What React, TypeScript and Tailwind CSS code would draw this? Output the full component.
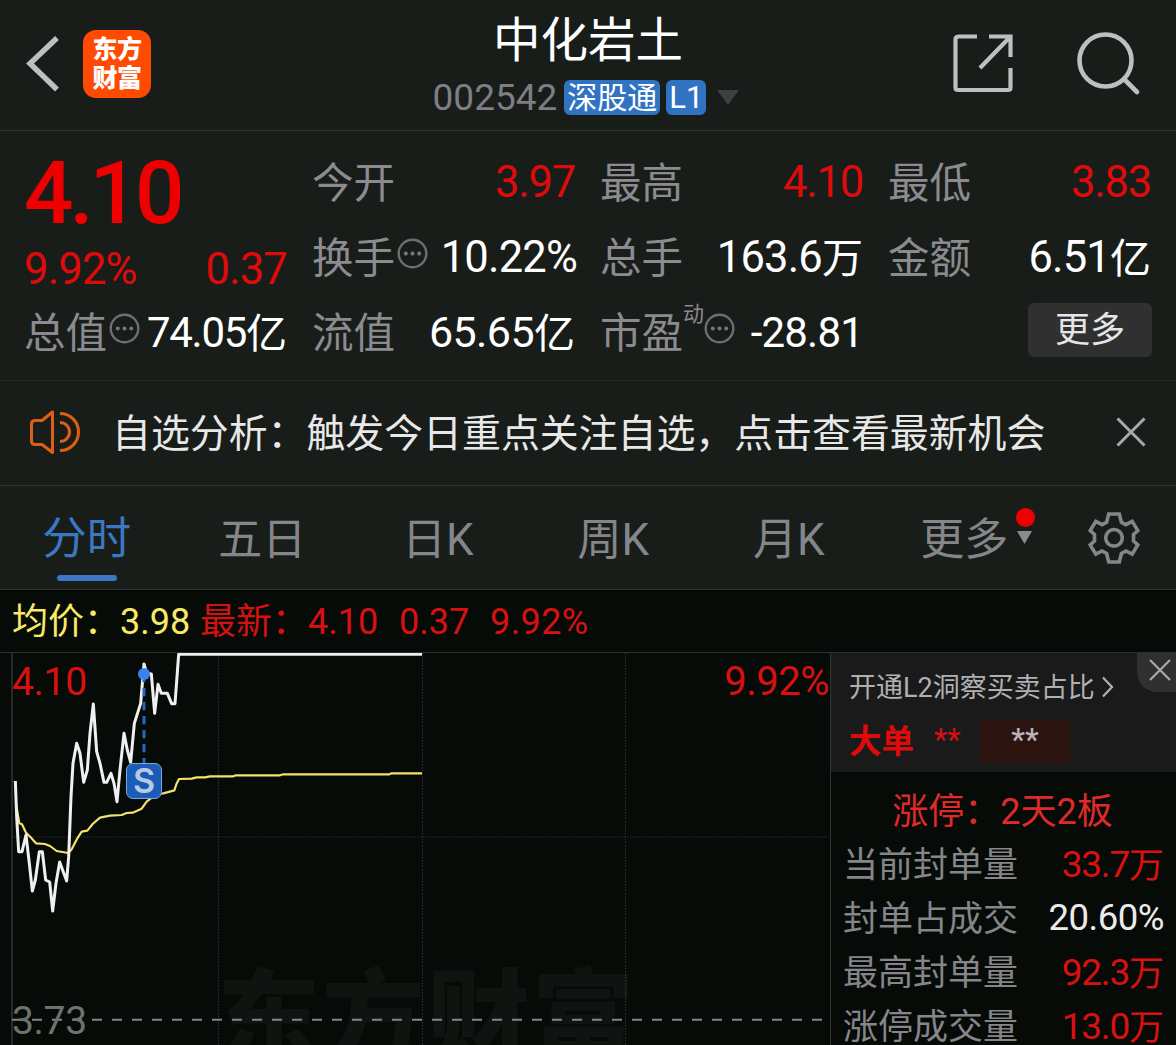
import type { ReactNode } from 'react';

const Unit = ({ children }: { children: ReactNode }) => (
  <span className="relative top-px text-[41px] tracking-normal">{children}</span>
);

const InfoDots = () => (
  <svg className="ml-[2px] h-[31px] w-[31px] shrink-0 -translate-y-[4px]" viewBox="0 0 31 31" fill="none">
    <circle cx="15.5" cy="15.5" r="13.8" stroke="#6f6f70" strokeWidth="2.4" />
    <circle cx="8.8" cy="15.5" r="2" fill="#77777a" />
    <circle cx="15.5" cy="15.5" r="2" fill="#77777a" />
    <circle cx="22.2" cy="15.5" r="2" fill="#77777a" />
  </svg>
);

function Stat({ label, extra, children, tone }: { label: string; extra?: ReactNode; children: ReactNode; tone: string }) {
  return (
    <div className="flex items-center justify-between whitespace-nowrap">
      <div className="-ml-px flex items-center">
        <span className="pt-[3px] text-[41.5px] text-[#8b8b90]">{label}</span>
        {extra}
      </div>
      <span className={tone}>{children}</span>
    </div>
  );
}

function Header() {
  return (
    <header className="flex h-[131px] items-start justify-between border-b border-[#303330] pl-[25px] pr-[35px]">
      <div className="flex w-[410px] items-start pt-[30px]">
        <svg className="h-[68px] w-[36px]" viewBox="0 0 36 68" fill="none">
          <path d="M32 8L5 33.500L32 59.500" stroke="#bfbfbf" strokeWidth="5.4" />
        </svg>
        <div className="ml-[22px] flex h-[68px] w-[68px] flex-col items-center justify-center rounded-[13px] bg-[#ff4a02] pb-px text-[25px] font-black leading-[29px] tracking-[-0.5px] text-white">
          <span>东方</span>
          <span>财富</span>
        </div>
      </div>
      <div className="flex flex-col items-center">
        <h1 className="mt-[12px] text-[47.5px] leading-[58px] text-white">中化岩土</h1>
        <div className="mr-[4px] mt-[8px] flex h-[38px] items-center">
          <span className="text-[37px] text-[#7e7e84]">002542</span>
          <span className="ml-[7px] flex h-[35px] w-[96px] items-center justify-center rounded-[6px] bg-[#3173c3] pt-px text-[30px] text-white">深股通</span>
          <span className="ml-[6px] flex h-[35px] w-[40px] items-center justify-center rounded-[6px] bg-[#3173c3] text-[31px] text-white">L1</span>
          <svg className="ml-[11px] h-[15px] w-[22px]" viewBox="0 0 22 15">
            <path d="M0 0H22L11 15Z" fill="#3f3f3f" />
          </svg>
        </div>
      </div>
      <div className="flex w-[400px] items-start justify-end gap-[62px] pt-[30px]">
        <svg className="h-[66px] w-[62px]" viewBox="0 0 62 66" fill="none" stroke="#bfbfbf" strokeWidth="4.2">
          <path d="M26 6.5H8Q4.500 6.500 4.500 9V57.500Q4.500 60 7 60H57Q59.500 60 59.500 57.500V38" />
          <path d="M38 6.500H59.500V27M58 8L29 38" />
        </svg>
        <svg className="h-[66px] w-[66px]" viewBox="0 0 66 66" fill="none" stroke="#bfbfbf" strokeWidth="4.600">
          <circle cx="30.500" cy="30.500" r="26" />
          <path d="M49 49L62 62" strokeLinecap="round" />
        </svg>
      </div>
    </header>
  );
}

function Quote() {
  const red = 'text-[43.500px] tracking-[-1.200px] text-[#df0b0b]';
  const white = 'text-[43.500px] tracking-[-0.800px] text-white';
  return (
    <section className="grid h-[250px] grid-cols-4 grid-rows-[75px_75px_75px] gap-x-[26px] border-b border-[#252825] px-[25px] pt-[14px]">
      <div className="row-span-2 flex flex-col">
        <span className="-ml-px mt-[6px] h-[84px] text-[87px] font-medium leading-[84px] tracking-[-4px] text-[#ee0000]">4.10</span>
        <div className="mt-[13px] flex h-[44px] items-center justify-between text-[43.5px] tracking-[-0.8px] text-[#df0b0b]">
          <span className="-ml-px">9.92%</span>
          <span>0.37</span>
        </div>
      </div>
      <Stat label="今开" tone={red}>3.97</Stat>
      <Stat label="最高" tone={red}>4.10</Stat>
      <Stat label="最低" tone={red}>3.83</Stat>
      <Stat label="换手" extra={<InfoDots />} tone="-mr-[2px] text-[43.500px] tracking-[-0.800px] text-white">10.22%</Stat>
      <Stat label="总手" tone={white}>163.6<Unit>万</Unit></Stat>
      <Stat label="金额" tone={white}>6.51<Unit>亿</Unit></Stat>
      <Stat label="总值" extra={<InfoDots />} tone="text-[42px] tracking-[-1.300px] text-white">74.05<Unit>亿</Unit></Stat>
      <Stat label="流值" tone="text-[43px] tracking-[-0.600px] text-white">65.65<Unit>亿</Unit></Stat>
      <Stat
        label="市盈"
        extra={<><span className="-mr-[2px] -translate-y-[18px] text-[21px] text-[#8b8b90]">动</span><InfoDots /></>}
        tone="text-[42px] tracking-[-0.8px] text-white"
      >-28.81</Stat>
      <div className="flex items-center justify-end">
        <button className="-mr-px mt-[-5px] flex h-[54px] w-[124px] items-center justify-center rounded-[6px] bg-[#303031] pt-px text-[35px] text-[#e6e6e6]">更多</button>
      </div>
    </section>
  );
}

function Notice() {
  return (
    <section className="flex h-[105px] items-center border-b border-[#303330] pl-[29px] pr-[29px]">
      <svg className="h-[44px] w-[52px] -translate-y-px" viewBox="0 0 52 44" fill="none" stroke="#dc5f16" strokeWidth="3">
        <path d="M23.500 2V42.500L13 34.500H6Q2.500 34.500 2.500 31V14Q2.500 10.500 6 10.500H13Z" strokeLinejoin="round" />
        <path d="M31 3.500A18.500 18.500 0 0 1 31 40.500" />
        <path d="M31 12.500A9.500 9.500 0 0 1 31 31.500" />
      </svg>
      <p className="ml-[31px] flex-1 whitespace-nowrap pt-[2px] text-[38.9px] text-[#e8e8e8]">自选分析：触发今日重点关注自选，点击查看最新机会</p>
      <svg className="h-[32px] w-[32px] -translate-y-px" viewBox="0 0 32 32" fill="none" stroke="#a9a9a9" strokeWidth="3">
        <path d="M2.500 2.500L29.500 29.500M29.500 2.500L2.500 29.500" />
      </svg>
    </section>
  );
}

const tabs = ['分时', '五日', '日K', '周K', '月K', '更多'];

function Tabs() {
  return (
    <nav className="flex h-[104px] items-center border-b border-[#303330]">
      {tabs.map((tab, i) => (
        <div
          key={tab}
          className={
            i === 0
              ? 'relative flex h-full w-[175.5px] items-center justify-center pr-[2px] pt-[4px] text-[44.5px] text-[#3a78c4]'
              : 'relative flex h-full w-[175.5px] items-center justify-center pr-[2px] pt-[4px] text-[44px] text-[#85858a]'
          }
        >
          {tab}
          {i === 0 && <span className="absolute bottom-[8px] left-[57px] h-[6px] w-[60px] rounded-full bg-[#3a78c4]" />}
          {i === 5 && (
            <>
              <span className="absolute left-[138px] top-[22px] h-[19px] w-[19px] rounded-full bg-[#ee0000]" />
              <svg className="absolute left-[139px] top-[45px] h-[13px] w-[15px]" viewBox="0 0 15 13">
                <path d="M0 0H15L7.500 13Z" fill="#8b8b90" />
              </svg>
            </>
          )}
        </div>
      ))}
      <svg className="ml-[34px] h-[54px] w-[54px]" viewBox="0 0 54 54" fill="none" stroke="#85858a" strokeWidth="3.600">
        <path d="M21.700 3H32.300L34.400 11.300L38.800 13.700L45.200 10.300L50.800 19.700L46.500 23.500V30L50.800 33.800L45.200 43.200L39 40L34.400 42.500L32.300 51H21.700L19.600 42.500L15 40L8.800 43.200L3.200 33.800L7.500 30V23.500L3.200 19.700L8.800 10.300L15.200 13.700L19.600 11.300Z" />
        <circle cx="27" cy="26.800" r="8.300" />
      </svg>
    </nav>
  );
}

function PriceChart() {
  return (
    <div className="relative h-[392px] w-[830px] overflow-hidden">
      <div className="absolute left-[217px] top-[306px] flex gap-[2px] whitespace-nowrap text-[103px] font-black leading-[124px] text-[#101411]">
        <span>东</span><span>方</span><span>财</span><span>富</span>
      </div>
      <svg className="absolute left-0 top-0 h-[392px] w-[830px]" viewBox="0 0 830 392" fill="none">
        <path d="M12 0V392" stroke="#333633" strokeWidth="1.500" />
        <path d="M218.500 0V392M422.500 0V392M625.500 0V392M12 184H828" stroke="#2e312e" strokeWidth="1.200" strokeDasharray="1.500 1.500" />
        <path d="M12 366.700H822" stroke="#858585" strokeWidth="2" strokeDasharray="10 10" />
        <g transform="translate(0 -63) scale(0.33333)" strokeLinejoin="round">
          <path
            d="M48 640L58 700L66 703L78 728L92 742L108 760L135 762L150 768L170 783L205 789L215 778L232 745L245 725L262 722L278 702L300 683L330 677L365 675L380 669L398 668L425 656L440 635L470 612L490 610L523 601L529 583L537 567L575 566L590 562L615 562L630 559L700 559L708 556L840 556L850 553L1168 553L1175 550L1266 550"
            stroke="#f3e36b" strokeWidth="6.500"
          />
          <path
            d="M46 573L50 680L56 785L66 785L78 735L88 820L97 903L106 870L118 785L127 785L137 870L149 876L158 963L168 880L179 816L200 873L206 800L213 620L219 520L230 460L240 490L251 577L262 540L270 430L280 342L290 485L300 520L312 577L320 577L333 550L342 580L351 635L360 540L372 430L382 480L392 517L403 400L422 340L432 222L440 250L454 252L464 370L474 283L484 310L502 310L515 341L525 341L536 193L1266 193"
            stroke="#f0f0f0" strokeWidth="9"
          />
          <path d="M432 270V520" stroke="#2567bd" strokeWidth="9" strokeDasharray="25 17" strokeDashoffset="18" />
          <circle cx="432" cy="252" r="18" fill="#3983ee" />
        </g>
      </svg>
      <span className="absolute left-[12px] top-[9px] text-[39px] leading-[40px] tracking-[-0.3px] text-[#d81010]">4.10</span>
      <span className="absolute right-[1px] top-[9px] text-[40px] leading-[40px] tracking-[-0.5px] text-[#d81010]">9.92%</span>
      <span className="absolute left-[12px] top-[348px] text-[39px] leading-[40px] tracking-[-0.3px] text-[#6f726f]">3.73</span>
      <span className="absolute left-[126px] top-[110px] flex h-[36px] w-[36px] items-center justify-center rounded-[7px] border border-[#7fa6dc] bg-[#1b5cb6] font-[Inter] text-[34px] font-semibold text-[#b9c8e3]">S</span>
    </div>
  );
}

const orders = [
  { label: '当前封单量', value: '33.7', unit: '万' },
  { label: '封单占成交', value: '20.60%', unit: '' },
  { label: '最高封单量', value: '92.3', unit: '万' },
  { label: '涨停成交量', value: '13.0', unit: '万' },
];

function OrderPanel() {
  return (
    <aside className="h-[392px] flex-1 overflow-hidden border-l border-[#333633]">
      <div className="relative h-[119px] bg-[#1a1a1b] pl-[18px] pt-[20px]">
        <div className="flex h-[28px] items-center text-[27px] text-[#b0b0b2]">
          <span className="pt-[3px]">开通L2洞察买卖占比</span>
          <svg className="ml-[6px] h-[22px] w-[13px]" viewBox="0 0 13 22" fill="none" stroke="#b0b0b2" strokeWidth="2.200">
            <path d="M2 1.500L11 11L2 20.500" />
          </svg>
        </div>
        <div className="mt-[18px] flex h-[44px] items-center">
          <span className="pt-[3px] text-[32.500px] font-bold text-[#e00a0a]">大单</span>
          <span className="ml-[20px] w-[28px] text-[31px] text-[#d81010]">
            <span className="relative -top-[2px]">**</span>
          </span>
          <span className="ml-[18px] flex h-[44px] w-[90px] items-center justify-center bg-[#2b1310] text-[31px] font-medium text-[#b9b2b8]">
            <span className="relative -top-[2px]">**</span>
          </span>
        </div>
        <div className="absolute right-0 top-0 flex h-[39px] w-[39px] items-center justify-center rounded-bl-[20px] bg-[#303031] pb-[5px] pl-[6px]">
          <svg className="h-[24px] w-[24px]" viewBox="0 0 24 24" fill="none" stroke="#a9a9a9" strokeWidth="2.200">
            <path d="M2 2L22 22M22 2L2 22" />
          </svg>
        </div>
      </div>
      <div className="flex h-[65px] items-center justify-center pr-[2px] pt-[14px] text-[36px] text-[#df2a28]">涨停：2天2板</div>
      {orders.map(({ label, value, unit }) => (
        <div key={label} className="flex h-[54px] items-center justify-between whitespace-nowrap pl-[12px] pr-[12px]">
          <span className="pt-[3px] text-[35px] text-[#85858a]">{label}</span>
          <span className={unit ? 'text-[37px] tracking-[-1.200px] text-[#d81010]' : 'text-[36.5px] tracking-[-0.500px] text-[#ebebeb]'}>
            {value}
            <span className="relative top-px text-[35px] tracking-normal">{unit}</span>
          </span>
        </div>
      ))}
    </aside>
  );
}

export default function App() {
  return (
    <main className="h-[1045px] w-[1176px] overflow-hidden bg-[#191d1a] font-[Roboto,'Noto_Sans_CJK_SC',sans-serif] leading-none">
      <Header />
      <Quote />
      <Notice />
      <Tabs />
      <div className="flex h-[63px] items-center whitespace-pre border-b border-[#2c2f2c] bg-[#070b08] pl-[12px] pt-[2px] text-[36px] text-[#d81010]">
        <span className="w-[188px] text-[#f8ea66]">均价：3.98</span>
        <span className="w-[199px]">最新：4.10</span>
        <span className="w-[91px]">0.37</span>
        <span className="tracking-[0.4px]">9.92%</span>
      </div>
      <div className="flex bg-[#070b08]">
        <PriceChart />
        <OrderPanel />
      </div>
    </main>
  );
}
